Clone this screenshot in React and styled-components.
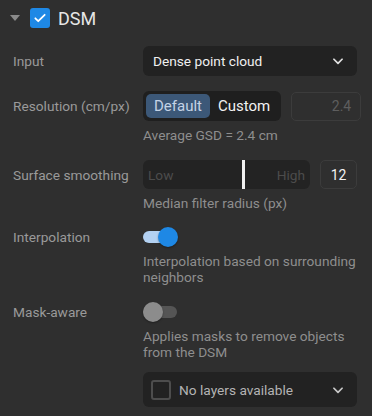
import React from "react";
import styled, { createGlobalStyle } from "styled-components";

const GlobalStyle = createGlobalStyle`
  html, body {
    margin: 0;
    padding: 0;
    background: #2f2f2f;
  }
  body {
    font-family: Roboto, "Noto Sans", "Liberation Sans", sans-serif;
    font-size: 13.7px;
  }
`;

const Panel = styled.div`
  width: 372px;
  height: 416px;
  background: #2f2f2f;
  box-sizing: border-box;
  padding: 8px 15px 0 10px;
  overflow: hidden;
`;

const Header = styled.div`
  display: flex;
  align-items: center;
  height: 20px;
  margin-bottom: 18px;
`;

const Caret = styled.div`
  width: 0;
  height: 0;
  border-left: 5px solid transparent;
  border-right: 5px solid transparent;
  border-top: 6px solid #8a8a8a;
  margin-right: 10px;
`;

const Check = styled.div`
  width: 20px;
  height: 20px;
  border-radius: 3px;
  box-sizing: border-box;
  display: flex;
  align-items: center;
  justify-content: center;
  background: ${(p) => (p.$on ? "#1e88e5" : "transparent")};
  border: ${(p) => (p.$on ? "none" : "2px solid #4d4d4d")};
  flex-shrink: 0;
`;

const Title = styled.span`
  margin-left: 8px;
  font-size: 18px;
  color: #e6e6e6;
`;

const Field = styled.div`
  display: grid;
  grid-template-columns: 130px 1fr;
  padding-left: 3px;
  margin-bottom: ${(p) => p.$gap}px;
`;

const Label = styled.div`
  height: ${(p) => p.$h}px;
  display: flex;
  align-items: center;
  color: #9a9a9a;
`;

const Controls = styled.div`
  display: flex;
  flex-direction: column;
`;

const Line = styled.div`
  display: flex;
  align-items: center;
  gap: 10px;
`;

const Select = styled.div`
  height: ${(p) => p.$h}px;
  flex: 1;
  background: #222222;
  border-radius: 6px;
  display: flex;
  align-items: center;
  padding: 0 12px 0 ${(p) => p.$pl}px;
  color: ${(p) => p.$color};
  box-sizing: border-box;
`;

const SelectText = styled.span`
  flex: 1;
`;

const Segmented = styled.div`
  display: flex;
  background: #1f1f1f;
  border-radius: 6px;
  padding: 3px;
  height: 30px;
  box-sizing: border-box;
`;

const Segment = styled.div`
  display: flex;
  align-items: center;
  padding: 0 8px;
  border-radius: 5px;
  color: ${(p) => (p.$active ? "#c4d3e6" : "#f2f2f2")};
  background: ${(p) => (p.$active ? "#3c5878" : "transparent")};
  font-size: 15px;
`;

const NumberBox = styled.div`
  height: 29px;
  width: ${(p) => p.$w}px;
  box-sizing: border-box;
  border: 1px solid #3c3c3c;
  border-radius: 5px;
  display: flex;
  align-items: center;
  justify-content: ${(p) => (p.$center ? "center" : "flex-end")};
  padding: 0 9px;
  color: ${(p) => p.$color};
  font-size: 14px;
  margin-left: auto;
`;

const Slider = styled.div`
  position: relative;
  flex: 1;
  height: 29px;
  background: #232323;
  border-radius: 6px;
  display: flex;
  align-items: center;
  justify-content: space-between;
  padding: 0 5px;
  color: #4c4c4c;
  box-sizing: border-box;
`;

const Thumb = styled.div`
  position: absolute;
  top: 0;
  bottom: 0;
  width: 3px;
  background: #f0f0f0;
`;

const Hint = styled.div`
  margin-top: 6px;
  color: #8e8e8e;
  line-height: 16px;
`;

const Toggle = styled.div`
  position: relative;
  width: 36px;
  height: 20px;
  display: flex;
  align-items: center;
`;

const Track = styled.div`
  width: 34px;
  height: 12px;
  border-radius: 6px;
  background: ${(p) => (p.$on ? "#b3d1f2" : "#555555")};
`;

const Knob = styled.div`
  position: absolute;
  top: 0;
  left: ${(p) => (p.$on ? "15px" : "0")};
  width: 20px;
  height: 20px;
  border-radius: 50%;
  background: ${(p) => (p.$on ? "#1e88e5" : "#8c8c8c")};
  box-shadow: 0 1px 2px rgba(0, 0, 0, 0.35);
`;

const Chevron = ({ color = "#e0e0e0" }) => (
  <svg width="14" height="14" viewBox="0 0 24 24" fill="none" stroke={color} strokeWidth="3" strokeLinecap="round" strokeLinejoin="round">
    <path d="M5 9l7 7 7-7" />
  </svg>
);

const Switch = ({ on }) => (
  <Toggle>
    <Track $on={on} />
    <Knob $on={on} />
  </Toggle>
);

export default function App() {
  return (
    <>
      <GlobalStyle />
      <Panel>
        <Header>
          <Caret />
          <Check $on>
            <svg width="14" height="14" viewBox="0 0 24 24" fill="none" stroke="#fff" strokeWidth="3" strokeLinecap="round" strokeLinejoin="round">
              <path d="M4 12.5l5 5L20 6.5" />
            </svg>
          </Check>
          <Title>DSM</Title>
        </Header>

        <Field $gap={15}>
          <Label $h={30}>Input</Label>
          <Controls>
            <Line>
              <Select $h={30} $pl={10} $color="#f0f0f0">
                <SelectText>Dense point cloud</SelectText>
                <Chevron />
              </Select>
            </Line>
          </Controls>
        </Field>

        <Field $gap={17}>
          <Label $h={30}>Resolution (cm/px)</Label>
          <Controls>
            <Line>
              <Segmented>
                <Segment $active>Default</Segment>
                <Segment>Custom</Segment>
              </Segmented>
              <NumberBox $w={70} $color="#5e5e5e">2.4</NumberBox>
            </Line>
            <Hint>Average GSD = 2.4 cm</Hint>
          </Controls>
        </Field>

        <Field $gap={16}>
          <Label $h={29}>Surface smoothing</Label>
          <Controls>
            <Line>
              <Slider>
                <span>Low</span>
                <span>High</span>
                <Thumb style={{ left: "59.5%" }} />
              </Slider>
              <NumberBox $w={37} $center $color="#f2f2f2">12</NumberBox>
            </Line>
            <Hint>Median filter radius (px)</Hint>
          </Controls>
        </Field>

        <Field $gap={17}>
          <Label $h={20}>Interpolation</Label>
          <Controls>
            <Switch on />
            <Hint>Interpolation based on surrounding neighbors</Hint>
          </Controls>
        </Field>

        <Field $gap={0}>
          <Label $h={20}>Mask-aware</Label>
          <Controls>
            <Switch />
            <Hint>Applies masks to remove objects from the DSM</Hint>
            <Line style={{ marginTop: 12 }}>
              <Select $h={35} $pl={8} $color="#b4b4b4">
                <Check />
                <SelectText style={{ marginLeft: 8 }}>No layers available</SelectText>
                <Chevron color="#c8c8c8" />
              </Select>
            </Line>
          </Controls>
        </Field>
      </Panel>
    </>
  );
}
